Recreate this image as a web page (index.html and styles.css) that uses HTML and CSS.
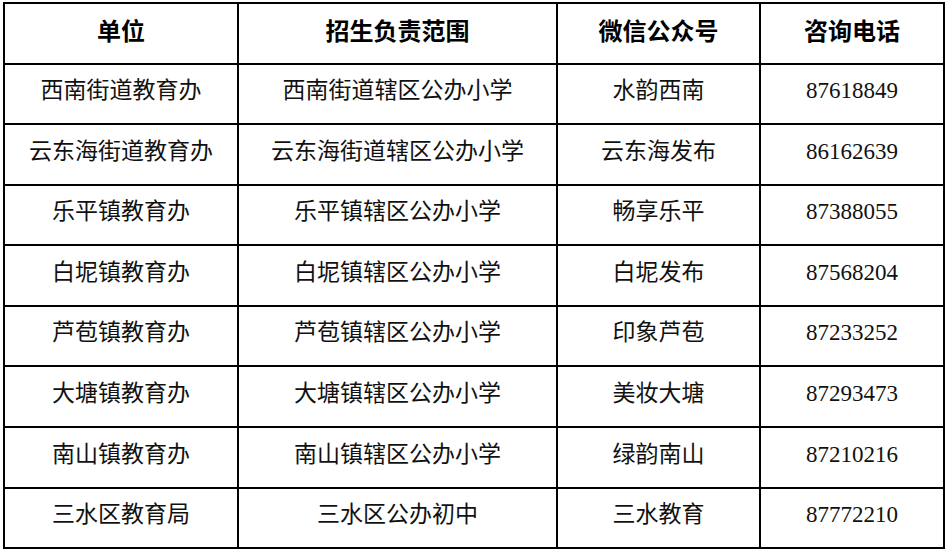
FILE: index.html
```html
<!DOCTYPE html>
<html lang="zh-CN">
<head>
<meta charset="utf-8">
<title>招生咨询</title>
<link rel="stylesheet" href="styles.css">
</head>
<body>
<div class="table">
  <div class="cell head">单位</div>
  <div class="cell head">招生负责范围</div>
  <div class="cell head">微信公众号</div>
  <div class="cell head">咨询电话</div>

  <div class="cell">西南街道教育办</div>
  <div class="cell">西南街道辖区公办小学</div>
  <div class="cell">水韵西南</div>
  <div class="cell">87618849</div>

  <div class="cell">云东海街道教育办</div>
  <div class="cell">云东海街道辖区公办小学</div>
  <div class="cell">云东海发布</div>
  <div class="cell">86162639</div>

  <div class="cell">乐平镇教育办</div>
  <div class="cell">乐平镇辖区公办小学</div>
  <div class="cell">畅享乐平</div>
  <div class="cell">87388055</div>

  <div class="cell">白坭镇教育办</div>
  <div class="cell">白坭镇辖区公办小学</div>
  <div class="cell">白坭发布</div>
  <div class="cell">87568204</div>

  <div class="cell">芦苞镇教育办</div>
  <div class="cell">芦苞镇辖区公办小学</div>
  <div class="cell">印象芦苞</div>
  <div class="cell">87233252</div>

  <div class="cell">大塘镇教育办</div>
  <div class="cell">大塘镇辖区公办小学</div>
  <div class="cell">美妆大塘</div>
  <div class="cell">87293473</div>

  <div class="cell">南山镇教育办</div>
  <div class="cell">南山镇辖区公办小学</div>
  <div class="cell">绿韵南山</div>
  <div class="cell">87210216</div>

  <div class="cell">三水区教育局</div>
  <div class="cell">三水区公办初中</div>
  <div class="cell">三水教育</div>
  <div class="cell">87772210</div>
</div>
</body>
</html>
```

FILE: styles.css
```css
html, body {
  margin: 0;
  padding: 0;
  background: #fff;
}

body {
  padding: 2px 0 0 3px;
}

.table {
  display: grid;
  width: 942px;
  box-sizing: border-box;
  grid-template-columns: 232px 317px 201px 182px;
  grid-template-rows: 59px 58px 59px 58px 59px 58px 59px 59px 58px;
  gap: 2px;
  padding: 2px;
  background: #000;
}

.cell {
  background: #fff;
  display: flex;
  align-items: center;
  justify-content: center;
  padding-bottom: 7px;
  box-sizing: border-box;
  font-family: "Liberation Serif", "Noto Sans CJK SC", serif;
  font-size: 23px;
  line-height: 1;
  color: #111;
  white-space: nowrap;
}

.cell.head {
  font-family: "Noto Sans CJK SC", sans-serif;
  font-weight: 700;
  font-size: 24px;
  color: #000;
  padding-bottom: 8px;
}
```
